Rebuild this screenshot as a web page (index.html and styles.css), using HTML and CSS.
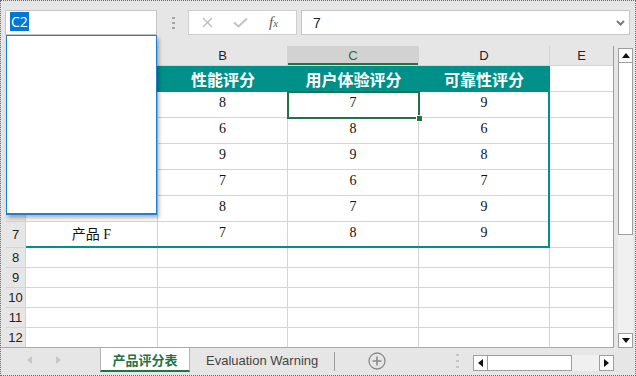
FILE: index.html
```html
<!DOCTYPE html>
<html lang="zh">
<head>
	<meta charset="UTF-8">
	<title>产品评分表</title>
	<link rel="stylesheet" href="styles.css">
</head>
<body>
	<div class="window">
		<div class="toolbar">
			<div class="name-box"><span class="name-sel">C2</span></div>
			<svg class="grip" width="3" height="12" viewBox="0 0 3 12"><rect x="0" y="0" width="3" height="2" fill="#a6a6a6"/><rect x="0" y="5" width="3" height="2" fill="#a6a6a6"/><rect x="0" y="10" width="3" height="2" fill="#a6a6a6"/></svg>
			<div class="fx-buttons">
				<span class="fx-btn"><svg width="11" height="11" viewBox="0 0 11 11"><path d="M1 1L10 10M10 1L1 10" stroke="#bdbdbd" stroke-width="1.4" fill="none"/></svg></span>
				<span class="fx-btn"><svg width="15" height="11" viewBox="0 0 15 11"><path d="M1 5.5L5.5 9.5L14 1.5" stroke="#c2c2c2" stroke-width="2" fill="none"/></svg></span>
				<span class="fx-btn fx-label"><i>f<small>x</small></i></span>
			</div>
			<div class="formula">
				<span>7</span>
				<svg width="9" height="6" viewBox="0 0 9 6"><path d="M1 1L4.5 4.5L8 1" stroke="#7a7a7a" stroke-width="2" fill="none"/></svg>
			</div>
		</div>

		<div class="main">
			<div class="left">
				<div class="grid">
					<div class="corner"></div>
					<div class="col-head">A</div>
					<div class="col-head">B</div>
					<div class="col-head active">C</div>
					<div class="col-head">D</div>
					<div class="col-head">E</div>

					<div class="row-head">1</div>
					<div class="cell th">产品</div>
					<div class="cell th">性能评分</div>
					<div class="cell th">用户体验评分</div>
					<div class="cell th last">可靠性评分</div>
					<div class="cell"></div>

					<div class="row-head active">2</div>
					<div class="cell">产品 A</div>
					<div class="cell">8</div>
					<div class="cell">7</div>
					<div class="cell">9</div>
					<div class="cell"></div>

					<div class="row-head">3</div>
					<div class="cell">产品 B</div>
					<div class="cell">6</div>
					<div class="cell">8</div>
					<div class="cell">6</div>
					<div class="cell"></div>

					<div class="row-head">4</div>
					<div class="cell">产品 C</div>
					<div class="cell">9</div>
					<div class="cell">9</div>
					<div class="cell">8</div>
					<div class="cell"></div>

					<div class="row-head">5</div>
					<div class="cell">产品 D</div>
					<div class="cell">7</div>
					<div class="cell">6</div>
					<div class="cell">7</div>
					<div class="cell"></div>

					<div class="row-head">6</div>
					<div class="cell">产品 E</div>
					<div class="cell">8</div>
					<div class="cell">7</div>
					<div class="cell">9</div>
					<div class="cell"></div>

					<div class="row-head">7</div>
					<div class="cell">产品 F</div>
					<div class="cell">7</div>
					<div class="cell">8</div>
					<div class="cell">9</div>
					<div class="cell"></div>

					<div class="row-head">8</div>
					<div class="cell"></div><div class="cell"></div><div class="cell"></div><div class="cell"></div><div class="cell"></div>
					<div class="row-head">9</div>
					<div class="cell"></div><div class="cell"></div><div class="cell"></div><div class="cell"></div><div class="cell"></div>
					<div class="row-head">10</div>
					<div class="cell"></div><div class="cell"></div><div class="cell"></div><div class="cell"></div><div class="cell"></div>
					<div class="row-head">11</div>
					<div class="cell"></div><div class="cell"></div><div class="cell"></div><div class="cell"></div><div class="cell"></div>
					<div class="row-head">12</div>
					<div class="cell"></div><div class="cell"></div><div class="cell"></div><div class="cell"></div><div class="cell"></div>

					<!-- table frame and selection drawn over the cells -->
					<div class="table-frame"></div>
					<div class="selection"><span class="handle"></span></div>
				</div>

				<div class="tabbar">
					<div class="tab-nav">
						<svg width="5" height="8" viewBox="0 0 5 8"><path d="M5 0L0 4L5 8Z" fill="#c8c8c8"/></svg>
						<svg width="5" height="8" viewBox="0 0 5 8"><path d="M0 0L5 4L0 8Z" fill="#c8c8c8"/></svg>
					</div>
					<div class="tab active">产品评分表</div>
					<div class="tab">Evaluation Warning</div>
					<span class="tab-sep"></span>
					<svg class="add-sheet" width="18" height="18" viewBox="0 0 18 18"><circle cx="9" cy="9" r="8" stroke="#8a8a8a" stroke-width="1.3" fill="none"/><path d="M9 4.5V13.5M4.5 9H13.5" stroke="#8a8a8a" stroke-width="1.6"/></svg>
					<svg class="tab-grip" width="3" height="14" viewBox="0 0 3 14"><rect x="0" y="0" width="3" height="2" fill="#c4c4c4"/><rect x="0" y="6" width="3" height="2" fill="#c4c4c4"/><rect x="0" y="12" width="3" height="2" fill="#c4c4c4"/></svg>
					<div class="hscroll">
						<span class="sb-btn"><svg width="5" height="8" viewBox="0 0 5 8"><path d="M5 0L0 4L5 8Z" fill="#111"/></svg></span>
						<span class="sb-thumb"></span>
						<span class="sb-track"></span>
						<span class="sb-btn"><svg width="5" height="8" viewBox="0 0 5 8"><path d="M0 0L5 4L0 8Z" fill="#111"/></svg></span>
					</div>
				</div>
			</div>

			<div class="vscroll">
				<span class="sb-btn"><svg width="8" height="5" viewBox="0 0 8 5"><path d="M0 5L4 0L8 5Z" fill="#111"/></svg></span>
				<span class="sb-thumb"></span>
				<span class="sb-track"></span>
				<span class="sb-btn"><svg width="8" height="5" viewBox="0 0 8 5"><path d="M0 0L4 5L8 0Z" fill="#111"/></svg></span>
			</div>
		</div>

		<div class="dropdown"></div>
	</div>
</body>
</html>
```

FILE: styles.css
```css
body {
	margin: 0;
	font-family: "Liberation Sans", Arial, sans-serif;
}
.window {
	position: relative;
	width: 636px;
	height: 376px;
	box-sizing: border-box;
	border: 1px dotted #6a6a6a;
	background: #e6e6e6;
	overflow: hidden;
}

/* formula bar */
.toolbar {
	display: flex;
	align-items: center;
	height: 25px;
	padding: 9px 0 0 4px;
}
.name-box {
	width: 152px;
	height: 25px;
	box-sizing: border-box;
	border: 1px solid #c6c6c6;
	background: #fff;
	padding: 1px 0 0 4px;
}
.name-sel {
	display: inline-block;
	height: 19px;
	line-height: 19px;
	padding: 0 1px;
	background: #0078d7;
	color: #fff;
	font-family: "Open Sans", sans-serif;
	font-size: 14px;
}
.grip {
	margin-left: 15px;
}
.fx-buttons {
	display: flex;
	align-items: center;
	margin-left: 13px;
	width: 109px;
	height: 25px;
	box-sizing: border-box;
	border: 1px solid #cfcfcf;
	background: #fff;
	padding-left: 2px;
}
.fx-btn {
	width: 33px;
	display: flex;
	justify-content: center;
	align-items: center;
}
.fx-label {
	font-family: "Liberation Serif", serif;
	font-size: 15px;
	color: #5a5a5a;
}
.fx-label small {
	font-size: 11px;
}
.formula {
	display: flex;
	align-items: center;
	justify-content: space-between;
	margin-left: 4px;
	width: 329px;
	height: 25px;
	box-sizing: border-box;
	border: 1px solid #c6c6c6;
	background: #fff;
	padding: 0 4px 0 11px;
	font-size: 14px;
	color: #222;
}

/* sheet */
.main {
	display: flex;
	margin-top: 11px;
}
.left {
	display: flex;
	flex-direction: column;
	width: 613px;
}
.grid {
	position: relative;
	display: grid;
	grid-template-columns: 19px 131px 129px 130px 130px 63px;
	grid-template-rows: 19px repeat(7, 25px) repeat(5, 19px);
	gap: 1px;
	background: #d4d4d4;
	margin-left: 5px;
	border-right: 1px solid #9c9c9c;
}
.corner,
.col-head,
.row-head {
	background: #e6e6e6;
	display: flex;
	align-items: center;
	justify-content: center;
	font-size: 13px;
	color: #222;
}
.col-head.active {
	background: #d2d2d2;
	color: #217346;
	box-shadow: inset 0 -2px 0 #217346;
}
.row-head.active {
	background: #d2d2d2;
	color: #217346;
}
.cell {
	background: #fff;
	display: flex;
	align-items: center;
	justify-content: center;
	box-sizing: border-box;
	padding-bottom: 3px;
	font-family: "Liberation Serif", "Noto Sans CJK SC", serif;
	font-size: 14px;
	color: #111;
}
.cell.th {
	padding-bottom: 0;
	background: #00908a;
	color: #fff;
	font-family: "Noto Sans CJK SC", sans-serif;
	font-weight: bold;
	font-size: 16px;
	margin-right: -1px;
	margin-bottom: -1px;
}
.cell.th.last {
	margin-right: 0;
}
.table-frame {
	position: absolute;
	grid-column: 2 / 6;
	grid-row: 2 / 9;
	top: 0;
	left: 0;
	right: -1px;
	bottom: -1px;
	border-right: 2px solid #00908a;
	border-bottom: 2px solid #00908a;
	pointer-events: none;
}
.selection {
	position: absolute;
	grid-column: 4 / 5;
	grid-row: 3 / 4;
	top: -1px;
	left: -1px;
	right: -2px;
	bottom: -2px;
	border: 2px solid #217346;
	pointer-events: none;
}
.selection .handle {
	position: absolute;
	right: -5px;
	bottom: -5px;
	width: 5px;
	height: 5px;
	background: #217346;
	border: 1px solid #fff;
}

/* sheet tabs */
.tabbar {
	display: flex;
	height: 24px;
	border-top: 1px solid #ababab;
}
.tab-nav {
	width: 99px;
	display: flex;
	align-items: center;
	padding-left: 26px;
	box-sizing: border-box;
	gap: 24px;
}
.tab {
	display: flex;
	align-items: center;
	padding: 0 16px;
	font-size: 13px;
	color: #444;
}
.tab.active {
	width: 90px;
	box-sizing: border-box;
	justify-content: center;
	padding: 0;
	background: #fff;
	border-left: 1px solid #b4b4b4;
	border-right: 1px solid #b4b4b4;
	border-bottom: 2px solid #217346;
	color: #217346;
	font-family: "Noto Sans CJK SC", sans-serif;
	font-weight: bold;
	font-size: 13px;
}
.tab-sep {
	width: 1px;
	height: 19px;
	margin-top: 4px;
	background: #9a9a9a;
}
.add-sheet {
	margin: 4px 0 0 33px;
}
.tab-grip {
	margin: 6px 0 0 auto;
}
.hscroll {
	display: flex;
	width: 141px;
	height: 16px;
	margin: 7px 0 0 14px;
}
.hscroll .sb-btn {
	width: 15px;
}
.hscroll .sb-thumb {
	width: 84px;
	border-left: 0;
}
.hscroll .sb-track {
	flex: 1;
}

/* scroll bars */
.sb-btn {
	display: flex;
	align-items: center;
	justify-content: center;
	box-sizing: border-box;
	border: 1px solid #9e9e9e;
	background: #fff;
}
.sb-thumb {
	box-sizing: border-box;
	border: 1px solid #9e9e9e;
	background: #fff;
}
.sb-track {
	background: #f0f0f0;
}
.vscroll {
	display: flex;
	flex-direction: column;
	width: 15px;
	height: 300px;
	margin: 2px 0 0 4px;
}
.vscroll .sb-btn {
	height: 15px;
}
.vscroll .sb-thumb {
	height: 172px;
	border-top: 0;
}
.vscroll .sb-track {
	flex: 1;
}

.dropdown {
	position: absolute;
	left: 5px;
	top: 34px;
	width: 151px;
	height: 180px;
	box-sizing: border-box;
	border: 1px solid #1e7fd6;
	border-bottom-width: 2px;
	background: #fff;
	box-shadow: 2px 3px 4px rgba(0, 0, 0, 0.3);
}
```
